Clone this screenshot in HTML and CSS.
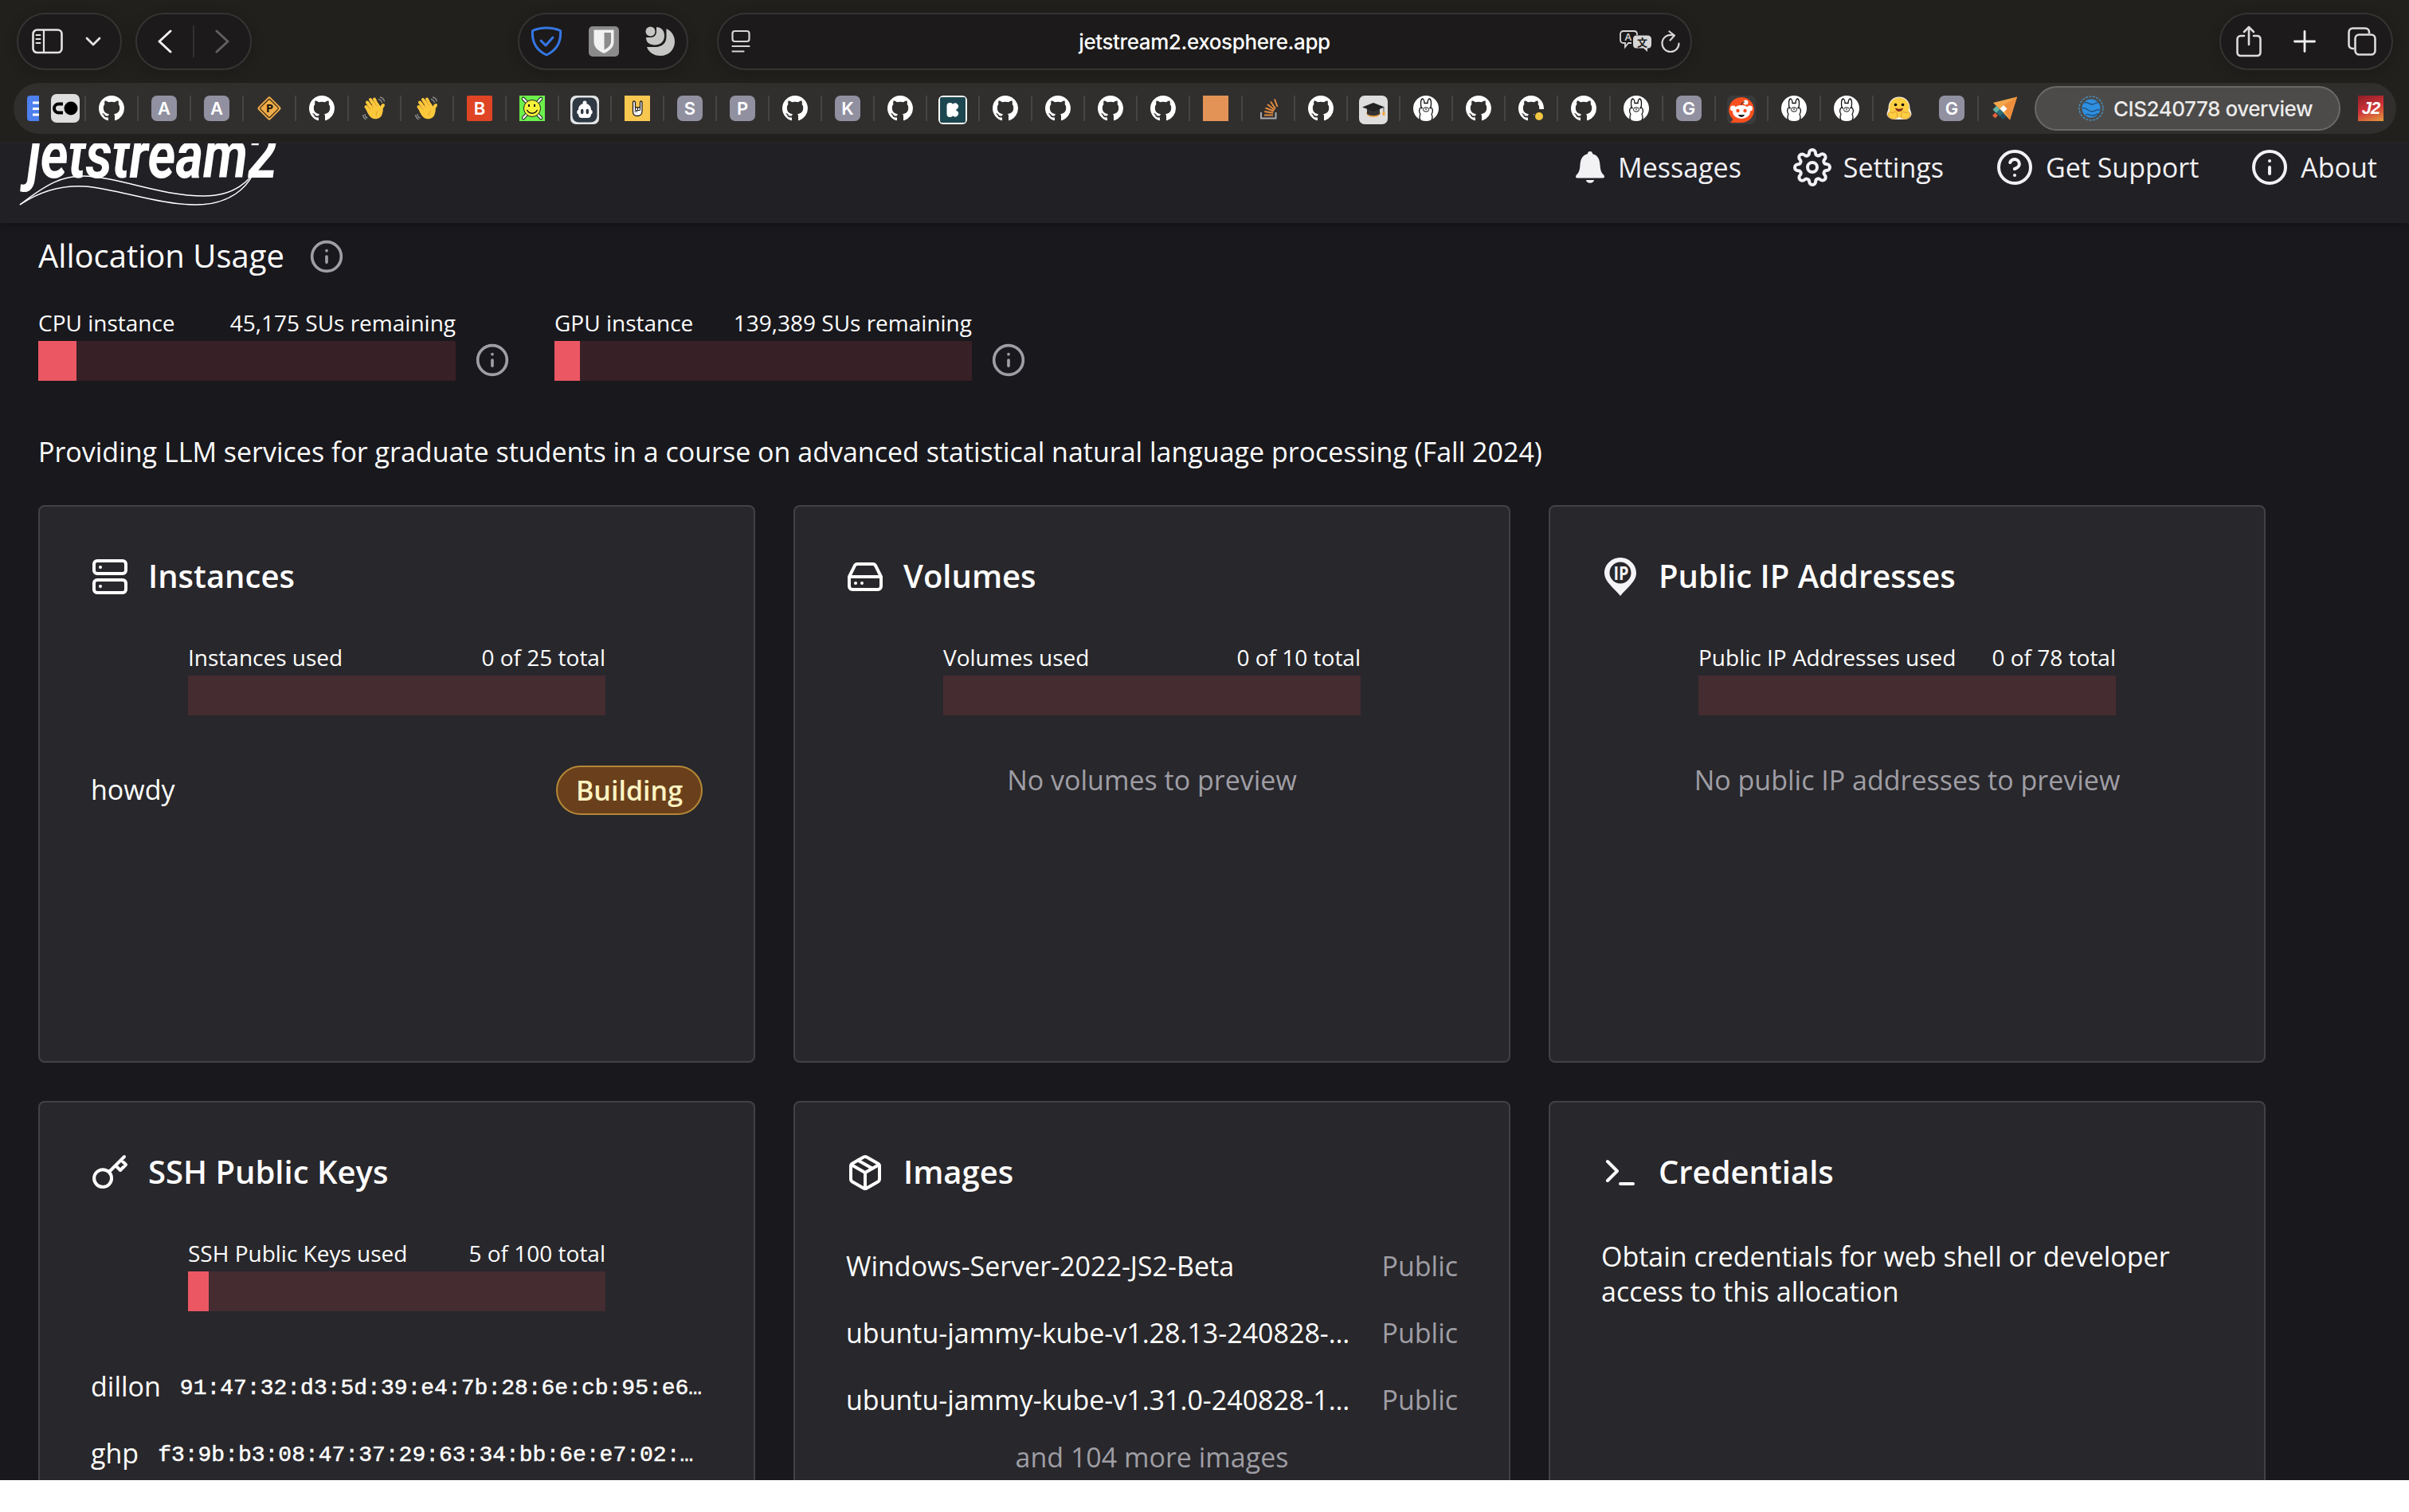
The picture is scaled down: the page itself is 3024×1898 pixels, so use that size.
FILE: index.html
```html
<html lang="en">

<head>
    <meta charset="UTF-8">
    <meta name="viewport" content="width=device-width, initial-scale=1.0">
    <title>CIS240778 overview</title>

    <link rel="stylesheet" href="styles.css">
</head>

<body>
    <!-- shared icons -->
    <svg width="0" height="0" class="defs">
        <symbol id="github" viewBox="0 0 16 16">
            <path fill="#fff" d="M8 0C3.58 0 0 3.58 0 8c0 3.54 2.29 6.53 5.47 7.59.4.07.55-.17.55-.38 0-.19-.01-.82-.01-1.49-2.01.37-2.53-.49-2.69-.94-.09-.23-.48-.94-.82-1.13-.28-.15-.68-.52-.01-.53.63-.01 1.08.58 1.23.82.72 1.21 1.87.87 2.33.66.07-.52.28-.87.51-1.07-1.78-.2-3.64-.89-3.64-3.95 0-.87.31-1.59.82-2.15-.08-.2-.36-1.02.08-2.12 0 0 .67-.21 2.2.82.64-.18 1.32-.27 2-.27s1.36.09 2 .27c1.53-1.04 2.2-.82 2.2-.82.44 1.1.16 1.92.08 2.12.51.56.82 1.27.82 2.15 0 3.07-1.87 3.75-3.65 3.95.29.25.54.73.54 1.48 0 1.07-.01 1.93-.01 2.2 0 .21.15.46.55.38A8.01 8.01 0 0 0 16 8c0-4.42-3.58-8-8-8z" />
        </symbol>
        <symbol id="wave" viewBox="0 0 32 32">
            <g stroke="#fbc83c" stroke-width="4" stroke-linecap="round" fill="none">
                <path d="M10 20L5.500 14M13 17L7 8.500M17 14L11 5M20 13L16 4.500" />
                <path d="M24.500 20c-.5-4 .5-6 2.500-8" />
            </g>
            <path fill="#fbc83c" d="M5.500 17l5-4 10-4 4 6c1.500 0 2 3 1.500 7-1 6-6 8-11 7-4-1-7-5-9.500-12z" />
            <path fill="none" stroke="#d9962a" stroke-width=".8" d="M7 12.500l4 5M9.500 8l5 7M14.500 6l4.500 7M21 19c-2 1-3 3-2.500 6" />
            <path fill="none" stroke="#8f8f8f" stroke-width="1.300" d="M21 4.500c2.500.5 4 2 4.500 4.500M23 2c3 .5 5 2.500 5.500 5.500M4 23c0 2.500 1.500 4.500 3.500 5M1.500 24c.5 3 2 5 4 6" />
        </symbol>
        <symbol id="llama" viewBox="0 0 32 32">
            <circle cx="16" cy="16" r="16" fill="#fff" />
            <g fill="none" stroke="#111" stroke-width="1.300">
                <path d="M9 31c-1.500-3-1.500-5 0-7.500-2-3-2-7 1-9-1-5-.5-10 1.500-10.500 1.500 0 2.500 3 2.500 5.500h4c0-2.500 1-5.500 2.500-5.500 2 .5 2.500 5.500 1.500 10.500 3 2 3 6 1 9 1.500 2.500 1.500 4.500 0 7.500" />
                <ellipse cx="16" cy="17.500" rx="3.600" ry="2.700" stroke-width="1" />
            </g>
            <path d="M15 16.500h2l-1 2z" />
            <circle cx="10.800" cy="15.500" r=".9" />
            <circle cx="21.200" cy="15.500" r=".9" />
        </symbol>
        <symbol id="info" viewBox="0 0 24 24">
            <g fill="none" stroke="currentColor" stroke-width="2" stroke-linecap="round">
                <circle cx="12" cy="12" r="10" />
                <path d="M12 16v-4M12 8h.01" />
            </g>
        </symbol>
    </svg>

    <div class="browser">
        <div class="toolbar">
            <div class="pill sidebar">
                <svg width="40" height="32" viewBox="0 0 40 32" fill="none" stroke="#e4e4e3" stroke-width="2.600">
                    <rect x="1.500" y="1.500" width="36" height="28.500" rx="5" />
                    <path d="M15 2v28" stroke-width="2.200" />
                    <path d="M5.500 8h5M5.500 13h5M5.500 18h5" stroke-width="2" stroke-linecap="round" />
                </svg>
                <svg width="20" height="12" viewBox="0 0 20 12" fill="none" stroke="#e4e4e3" stroke-width="2.800" stroke-linecap="round" stroke-linejoin="round">
                    <path d="M2 2l8 8 8-8" />
                </svg>
            </div>
            <div class="pill history">
                <svg width="18" height="30" viewBox="0 0 18 30" fill="none" stroke="#f0f0f0" stroke-width="3" stroke-linecap="round" stroke-linejoin="round">
                    <path d="M16 2L2 15l14 13" />
                </svg>
                <span class="divider"></span>
                <svg width="18" height="30" viewBox="0 0 18 30" fill="none" stroke="#62605f" stroke-width="3" stroke-linecap="round" stroke-linejoin="round">
                    <path d="M2 2l14 13L2 28" />
                </svg>
            </div>
            <div class="pill extensions">
                <svg width="40" height="38" viewBox="0 0 40 38" fill="none" stroke="#3577e5" stroke-width="3" stroke-linejoin="round" stroke-linecap="round">
                    <path d="M20 2c6 0 12 1 17.500 3.500C38.500 19 33 30 20 36 7 30 1.500 19 2.500 5.500 8 3 14 2 20 2z" />
                    <path d="M13 18l6 6 9-10" />
                </svg>
                <svg width="38" height="38" viewBox="0 0 38 38">
                    <rect width="38" height="38" rx="5" fill="#8b8b8b" />
                    <path fill="#f2f2f2" d="M6.500 4.500h25V19c0 8-6 12-12.500 15C12.500 31 6.500 27 6.500 19z" />
                    <path fill="#8b8b8b" d="M19.500 8H28v11c0 5-4 8-8.500 10.500z" />
                </svg>
                <svg width="38" height="38" viewBox="0 0 38 38" fill="#c6c6c5">
                    <circle cx="6.500" cy="6.500" r="6" />
                    <path d="M14 1c6 0 10 4 10 11s-5 11.500-12 11.500S1 20 1 14h6c4 0 7-3 7-7z" />
                    <path d="M26.500 3C33 6 37 12 37 19c0 10-7 18-18 18-9 0-15-5-17-11h11c8 0 13.500-5 13.500-13z" />
                </svg>
            </div>
            <div class="pill address">
                <svg width="24" height="30" viewBox="0 0 24 30" fill="none" stroke="#d6d6d6" stroke-width="2.200" stroke-linecap="round">
                    <rect x="1.500" y="2" width="21" height="13" rx="3" />
                    <path d="M1.500 21h21M1.500 27.500h14" />
                </svg>
                <span class="url">jetstream2.exosphere.app</span>
                <span class="address-actions">
                    <svg width="40" height="28" viewBox="0 0 40 28">
                        <path fill="none" stroke="#d6d6d6" stroke-width="1.800" d="M15 16h-4l-4 5v-5H5c-2.500 0-4-1.500-4-4V5c0-2.500 1.500-4 4-4h13c2.500 0 4 1.500 4 4v1" />
                        <path fill="#d6d6d6" d="M21 6.500h14c3 0 5 1.500 5 4.500v7c0 3-2 4.500-4 4.500h-1V27l-5-4.500h-9c-2.500 0-4-1.500-4-4.500v-7c0-3 1.500-4.500 4-4.500z" />
                        <text x="6.500" y="13" font-size="13" class="glyph" fill="#d6d6d6">A</text>
                        <text x="22" y="20" font-size="13" class="glyph cjk" fill="#1e1c1c">文</text>
                    </svg>
                    <svg width="24" height="29" viewBox="0 0 24 29" fill="none" stroke="#d6d6d6" stroke-width="2.200" stroke-linecap="round" stroke-linejoin="round">
                        <path d="M16 6.500C8 4 1.500 9.500 1.500 16.500a10.500 10.500 0 0 0 21 0M10.500 1.500l6.500 5-5.500 6" />
                    </svg>
                </span>
            </div>
            <div class="pill actions">
                <svg width="32" height="40" viewBox="0 0 32 40" fill="none" stroke="#dcdcdc" stroke-width="2.600" stroke-linecap="round" stroke-linejoin="round">
                    <path d="M10 13H6c-3 0-4.500 2-4.500 4.500v16C1.500 36.500 3 38 6 38h20c3 0 4.500-1.500 4.500-4.500v-16C30.500 15 29 13 26 13h-4M16 24V2.500M10 8l6-6 6 6" />
                </svg>
                <svg width="28" height="28" viewBox="0 0 28 28" stroke="#f0f0f0" stroke-width="2.800" stroke-linecap="round">
                    <path d="M14 1.500v25M1.500 14h25" />
                </svg>
                <svg width="36" height="36" viewBox="0 0 36 36" fill="none" stroke="#dcdcdc" stroke-width="2.600">
                    <rect x="9.500" y="9.500" width="25" height="25" rx="5" />
                    <path d="M8 27H6.500c-3 0-5-2-5-5V6.500c0-3 2-5 5-5H22c3 0 5 2 5 5V8" />
                </svg>
            </div>
        </div>

        <div class="tabs">
            <svg class="tab-doc" width="15" height="32" viewBox="0 0 15 32">
                <path fill="#4e80ee" d="M4 0h11v32H4c-2.500 0-4-1.500-4-4V4c0-2.500 1.500-4 4-4z" />
                <path stroke="#fff" stroke-width="3" d="M7 9h8M7 16.500h8M7 24h8" />
            </svg>
            <svg width="36" height="36" viewBox="0 0 36 36">
                <rect width="36" height="36" rx="7" fill="#dedede" />
                <circle cx="25" cy="18" r="8.500" />
                <path d="M15 12.500H9.500a5.500 5.500 0 0 0 0 11H15" fill="none" stroke="#000" stroke-width="4" />
            </svg>
            <div class="tab-list">
                <div class="tab"><svg class="fav"><use href="#github" /></svg></div>
                <div class="tab"><span class="fav letter">A</span></div>
                <div class="tab"><span class="fav letter">A</span></div>
                <div class="tab">
                    <svg class="fav" viewBox="0 0 32 32">
                        <rect x="5" y="5" width="22" height="22" rx="2.500" transform="rotate(45 16 16)" fill="#efac4c" />
                        <rect x="7.500" y="7.500" width="17" height="17" rx="1.500" transform="rotate(45 16 16)" fill="#f0ac49" stroke="#3b2a12" stroke-width="1.200" />
                        <text x="16.500" y="21" font-size="15" class="glyph bold" text-anchor="middle" fill="#20180c">P</text>
                    </svg>
                </div>
                <div class="tab"><svg class="fav"><use href="#github" /></svg></div>
                <div class="tab"><svg class="fav"><use href="#wave" /></svg></div>
                <div class="tab"><svg class="fav"><use href="#wave" /></svg></div>
                <div class="tab"><span class="fav letter red">B</span></div>
                <div class="tab">
                    <svg class="fav" viewBox="0 0 32 32">
                        <rect width="32" height="32" fill="#6cf04c" />
                        <path d="M5 4l22 24M27 4L5 28" stroke="#222" stroke-width="4.500" stroke-linecap="round" />
                        <path d="M5 4l22 24M27 4L5 28" stroke="#fff" stroke-width="2.500" stroke-linecap="round" />
                        <circle cx="16" cy="16" r="10.500" fill="#f5f03a" stroke="#222" />
                        <path d="M12 11v3M19 11v3" stroke="#111" stroke-width="2" />
                        <path d="M9.500 18c3 5.500 10 5.500 13 0" fill="none" stroke="#111" stroke-width="1.500" />
                    </svg>
                </div>
                <div class="tab">
                    <svg class="fav-l" viewBox="0 0 36 36">
                        <rect width="36" height="36" rx="7" fill="#e2e4e6" />
                        <rect x="2.500" y="2.500" width="31" height="31" rx="8" fill="#2e3944" />
                        <circle cx="18" cy="9" r="2.500" fill="#fff" />
                        <path d="M18 10c5 0 8 3 8 8 2 0 2.500 5 0 5.500 0 3-2 4.500-4 4.500h-8c-2 0-4-1.500-4-4.500-2.500-.5-2-5.500 0-5.500 0-5 3-8 8-8z" fill="#fff" />
                        <path d="M14.700 18.500v3M21.300 18.500v3" stroke="#2e3944" stroke-width="3.400" stroke-linecap="round" />
                    </svg>
                </div>
                <div class="tab">
                    <svg class="fav" viewBox="0 0 32 32">
                        <rect width="32" height="32" fill="#f7c750" />
                        <path d="M10.500 8.500V20c0 3.500 2 5.500 5.500 5.500s6-2 6-6v-11c0-2-2.500-2-2.500 0V15h-6V8.500c0-2-3-2-3 0z" fill="#fff" stroke="#222" stroke-width="1.300" />
                        <path d="M13.500 15v3.500h6V15M16.500 15v3.500M12.500 20h4" stroke="#222" fill="none" />
                    </svg>
                </div>
                <div class="tab"><span class="fav letter">S</span></div>
                <div class="tab"><span class="fav letter">P</span></div>
                <div class="tab"><svg class="fav"><use href="#github" /></svg></div>
                <div class="tab"><span class="fav letter">K</span></div>
                <div class="tab"><svg class="fav"><use href="#github" /></svg></div>
                <div class="tab">
                    <svg class="fav-l" viewBox="0 0 36 36">
                        <rect width="36" height="36" rx="6" fill="#fff" />
                        <rect x="2" y="2" width="32" height="32" rx="2" fill="#1d4750" />
                        <path d="M14.500 13v10M15 18l6-4.500M15 18l6 4.500" stroke="#fff" stroke-width="8" stroke-linecap="round" />
                    </svg>
                </div>
                <div class="tab"><svg class="fav"><use href="#github" /></svg></div>
                <div class="tab"><svg class="fav"><use href="#github" /></svg></div>
                <div class="tab"><svg class="fav"><use href="#github" /></svg></div>
                <div class="tab"><svg class="fav"><use href="#github" /></svg></div>
                <div class="tab"><span class="fav orange"></span></div>
                <div class="tab">
                    <svg class="fav" viewBox="0 0 32 32" fill="none">
                        <path d="M7 21v7.500h18.500V21" stroke="#a9abae" stroke-width="2" />
                        <path d="M11 24.500h11M11.200 20l11 1.800M12.500 15.500l10.500 4M15 11l9 7M19 7.500l6 9M24 4.500L27.500 14" stroke="#e08a3f" stroke-width="2" />
                    </svg>
                </div>
                <div class="tab"><svg class="fav"><use href="#github" /></svg></div>
                <div class="tab">
                    <svg class="fav-l" viewBox="0 0 36 36">
                        <rect width="36" height="36" rx="7" fill="#dedede" />
                        <path d="M9 21c5 3 13 3 18 0 0 8-18 8-18 0z" fill="#eda544" />
                        <path d="M10 16h16v7c-4 3-12 3-16 0z" fill="#333" />
                        <path d="M18 9l14 5.500L18 20 4 14.500z" fill="#222" />
                        <path d="M31 15v7" stroke="#555" />
                        <path d="M31 20v5" stroke="#eda544" stroke-width="3" />
                    </svg>
                </div>
                <div class="tab"><svg class="fav"><use href="#llama" /></svg></div>
                <div class="tab"><svg class="fav"><use href="#github" /></svg></div>
                <div class="tab">
                    <svg class="fav" viewBox="0 0 32 32">
                        <use href="#github" width="32" height="32" />
                        <path fill="#312f2e" d="M20 17h12v15H20z" />
                        <circle cx="26" cy="26" r="5" fill="#f2c744" />
                    </svg>
                </div>
                <div class="tab"><svg class="fav"><use href="#github" /></svg></div>
                <div class="tab"><svg class="fav"><use href="#llama" /></svg></div>
                <div class="tab"><span class="fav letter">G</span></div>
                <div class="tab">
                    <svg class="fav-l" viewBox="0 0 36 36">
                        <rect width="36" height="36" rx="7" fill="#3a3b3c" />
                        <path d="M18 2a16 16 0 1 1 0 32H4l3.500-4A16 16 0 0 1 18 2z" fill="#fa4f1e" />
                        <circle cx="7.500" cy="16" r="3.500" fill="#fff" />
                        <circle cx="28.500" cy="16" r="3.500" fill="#fff" />
                        <ellipse cx="18" cy="20.500" rx="11" ry="8.500" fill="#fff" />
                        <circle cx="23.500" cy="8.500" r="3" fill="#fff" />
                        <path d="M18 12c0-3 2-4 4-4" stroke="#222" fill="none" />
                        <circle cx="13.500" cy="19" r="2.200" fill="#fa4f1e" />
                        <circle cx="22.500" cy="19" r="2.200" fill="#fa4f1e" />
                        <path d="M14 24h8c-1 4-7 4-8 0z" fill="#222" />
                    </svg>
                </div>
                <div class="tab"><svg class="fav"><use href="#llama" /></svg></div>
                <div class="tab"><svg class="fav"><use href="#llama" /></svg></div>
                <div class="tab">
                    <svg class="fav" viewBox="0 0 32 32">
                        <path d="M16 1.500c8 0 13.500 6 13.500 14 0 3 2 5 2 8-1 5-6 7-11 6.500h-9C6 30 1.500 28 .5 23.500c0-3 2-5 2-8 0-8 5.500-14 13.500-14z" fill="#f6f1e4" />
                        <circle cx="16" cy="15" r="12.500" fill="#fbcf41" />
                        <path d="M2 24c0-3 3-5 5-2l4-2c3 1 3 6 2 8-3 2-10 2-11-4zM30 24c0-3-3-5-5-2l-4-2c-3 1-3 6-2 8 3 2 10 2 11-4z" fill="#fbcf41" stroke="#e59a35" />
                        <circle cx="11.500" cy="11.500" r="1.800" />
                        <circle cx="20.500" cy="11.500" r="1.800" />
                        <path d="M11 15.500c3 1.500 7 1.500 10 0-1 6-9 6-10 0z" fill="#8a2d20" />
                    </svg>
                </div>
                <div class="tab no-line"><span class="fav letter">G</span></div>
                <div class="tab">
                    <svg class="fav" viewBox="0 0 32 32">
                        <path d="M32 1.500L2 9l21 21.500z" fill="#f3a74c" />
                        <path d="M32 1.500L13 13l10 17.500z" fill="#ef8f3d" />
                        <path d="M6 13l4.500 4.500L6 22l-4.500-4.500z" fill="#63b5a4" />
                        <path d="M15 12l4.500 4.500L15 21l-4.500-4.500z" fill="#fff" />
                        <path d="M10.500 17l4.500 4.500-4.500 4.500L6 21.500z" fill="#2b6f7d" />
                        <path d="M4.500 21.500L8 25l-3.500 3.500L1 25z" fill="#e0623b" />
                        <path d="M14.500 22l4 4-4 4-4-4z" fill="#1d4d63" />
                    </svg>
                </div>
            </div>
            <div class="tab-active">
                <svg class="fav" viewBox="0 0 32 32">
                    <circle cx="16" cy="16" r="15" fill="none" stroke="#4a9fd0" stroke-width="1.200" stroke-dasharray="3 1.500" />
                    <circle cx="16" cy="16" r="11.500" fill="#2f8fe0" />
                    <path d="M7 9c4-2 6 2 10 2s5-3 8-2M5 16c5-2 7 4 12 4s6-4 10-2M9 24c4-2 5 1 9 1s4-2 7-2" fill="none" stroke="#1f4d78" stroke-width="1.300" />
                </svg>
                <span>CIS240778 overview</span>
            </div>
            <span class="fav j2">J2</span>
        </div>
    </div>

    <div class="app">
        <header>
            <svg class="logo" width="360" height="100" viewBox="0 0 360 100" fill="none" stroke="#fff">
                <text x="34" y="43" font-size="84" textLength="314" lengthAdjust="spacingAndGlyphs" fill="#fff" stroke="none">jetstream2</text>
                <path stroke-width="1.500" d="M25 77C60 50 78 41 104 41C150 42 200 66 256 66C295 66 315 46 323 29" />
                <path stroke-width="1.500" d="M25 77C50 60 78 52 108 54C150 58 200 77 246 77C290 77 310 54 318 38" />
            </svg>
            <nav>
                <a>
                    <svg class="bell" width="44" height="44" viewBox="0 0 44 44" fill="#f2f2f5">
                        <path d="M22 2c2 0 3 1 3 3 7 2 9 7 9.500 14 .5 8 2 10 5 13 1 2 .5 3.500-1.500 3.500H6c-2 0-2.500-1.500-1.500-3.500 3-3 4.500-5 5-13C10 12 12 7 19 5c0-2 1-3 3-3z" />
                        <path d="M17 38h10c-.5 5-9.500 5-10 0z" />
                    </svg>
                    Messages
                </a>
                <a>
                    <svg width="48" height="48" viewBox="0 0 24 24" fill="none" stroke="currentColor" stroke-width="2" stroke-linecap="round" stroke-linejoin="round">
                        <circle cx="12" cy="12" r="3" />
                        <path d="M19.400 15a1.650 1.650 0 0 0 .33 1.820l.06.06a2 2 0 0 1 0 2.830 2 2 0 0 1-2.830 0l-.06-.06a1.650 1.650 0 0 0-1.820-.33 1.650 1.650 0 0 0-1 1.510V21a2 2 0 0 1-2 2 2 2 0 0 1-2-2v-.09A1.650 1.650 0 0 0 9 19.400a1.650 1.650 0 0 0-1.820.33l-.06.06a2 2 0 0 1-2.830 0 2 2 0 0 1 0-2.830l.06-.06a1.650 1.650 0 0 0 .33-1.820 1.650 1.650 0 0 0-1.510-1H3a2 2 0 0 1-2-2 2 2 0 0 1 2-2h.09A1.650 1.650 0 0 0 4.600 9a1.650 1.650 0 0 0-.33-1.820l-.06-.06a2 2 0 0 1 0-2.830 2 2 0 0 1 2.830 0l.06.06a1.650 1.650 0 0 0 1.820.33H9a1.650 1.650 0 0 0 1-1.510V3a2 2 0 0 1 2-2 2 2 0 0 1 2 2v.09a1.650 1.650 0 0 0 1 1.510 1.650 1.650 0 0 0 1.820-.33l.06-.06a2 2 0 0 1 2.830 0 2 2 0 0 1 0 2.830l-.06.06a1.650 1.650 0 0 0-.33 1.820V9a1.650 1.650 0 0 0 1.510 1H21a2 2 0 0 1 2 2 2 2 0 0 1-2 2h-.09a1.650 1.650 0 0 0-1.510 1z" />
                    </svg>
                    Settings
                </a>
                <a>
                    <svg width="48" height="48" viewBox="0 0 24 24" fill="none" stroke="currentColor" stroke-width="2" stroke-linecap="round" stroke-linejoin="round">
                        <circle cx="12" cy="12" r="10" />
                        <path d="M9.090 9a3 3 0 0 1 5.830 1c0 2-3 3-3 3M12 17h.01" />
                    </svg>
                    Get Support
                </a>
                <a><svg width="48" height="48"><use href="#info" /></svg>About</a>
            </nav>
        </header>

        <main>
            <div class="heading">
                <h2>Allocation Usage</h2>
                <svg class="muted" width="44" height="44"><use href="#info" /></svg>
            </div>

            <div class="usage">
                <div class="meter">
                    <div class="meter-label"><span>CPU instance</span><span>45,175 SUs remaining</span></div>
                    <div class="bar"><div class="fill" style="width: 9.2%"></div></div>
                </div>
                <svg class="muted" width="44" height="44"><use href="#info" /></svg>
                <div class="meter">
                    <div class="meter-label"><span>GPU instance</span><span>139,389 SUs remaining</span></div>
                    <div class="bar"><div class="fill" style="width: 6.2%"></div></div>
                </div>
                <svg class="muted" width="44" height="44"><use href="#info" /></svg>
            </div>

            <p class="description">Providing LLM services for graduate students in a course on advanced statistical natural language processing (Fall 2024)</p>

            <div class="cards">
                <section class="card">
                    <div class="card-title">
                        <svg class="icon" viewBox="0 0 24 24">
                            <rect x="2" y="2" width="20" height="8" rx="2" />
                            <rect x="2" y="14" width="20" height="8" rx="2" />
                            <path d="M6 6h.01M6 18h.01" />
                        </svg>
                        <h3>Instances</h3>
                    </div>
                    <div class="meter">
                        <div class="meter-label"><span>Instances used</span><span>0 of 25 total</span></div>
                        <div class="bar"></div>
                    </div>
                    <div class="list">
                        <div class="item spread"><span class="name">howdy</span><span class="badge">Building</span></div>
                    </div>
                </section>

                <section class="card">
                    <div class="card-title">
                        <svg class="icon" viewBox="0 0 24 24">
                            <path d="M22 12H2M5.450 5.110L2 12v6a2 2 0 0 0 2 2h16a2 2 0 0 0 2-2v-6l-3.450-6.890A2 2 0 0 0 16.760 4H7.240a2 2 0 0 0-1.790 1.110zM6 16h.01M10 16h.01" />
                        </svg>
                        <h3>Volumes</h3>
                    </div>
                    <div class="meter">
                        <div class="meter-label"><span>Volumes used</span><span>0 of 10 total</span></div>
                        <div class="bar"></div>
                    </div>
                    <p class="empty">No volumes to preview</p>
                </section>

                <section class="card">
                    <div class="card-title">
                        <svg width="48" height="48" viewBox="0 0 48 48">
                            <path fill="#f4f4f6" fill-rule="evenodd" d="M24 0c11 0 20 8.500 20 19.500C44 30 33 37 24 48 15 37 4 30 4 19.500 4 8.500 13 0 24 0zm0 5.500a13.500 13.500 0 1 0 0 27 13.500 13.500 0 0 0 0-27z" />
                            <text x="25" y="27.500" font-size="23" class="glyph bold" text-anchor="middle" textLength="19" lengthAdjust="spacingAndGlyphs" fill="#f4f4f6">IP</text>
                        </svg>
                        <h3>Public IP Addresses</h3>
                    </div>
                    <div class="meter">
                        <div class="meter-label"><span>Public IP Addresses used</span><span>0 of 78 total</span></div>
                        <div class="bar"></div>
                    </div>
                    <p class="empty">No public IP addresses to preview</p>
                </section>

                <section class="card">
                    <div class="card-title">
                        <svg class="icon" viewBox="0 0 24 24">
                            <path d="M21 2l-2 2m-7.610 7.610a5.500 5.500 0 1 1-7.778 7.778 5.500 5.500 0 0 1 7.777-7.777zm0 0L15.500 7.500m0 0l3 3L22 7l-3-3m-3.500 3.500L19 4" />
                        </svg>
                        <h3>SSH Public Keys</h3>
                    </div>
                    <div class="meter">
                        <div class="meter-label"><span>SSH Public Keys used</span><span>5 of 100 total</span></div>
                        <div class="bar"><div class="fill" style="width: 5%"></div></div>
                    </div>
                    <div class="list">
                        <div class="item"><span>dillon</span><code>91:47:32:d3:5d:39:e4:7b:28:6e:cb:95:e6…</code></div>
                        <div class="item"><span>ghp</span><code>f3:9b:b3:08:47:37:29:63:34:bb:6e:e7:02:…</code></div>
                    </div>
                </section>

                <section class="card">
                    <div class="card-title">
                        <svg class="icon" viewBox="0 0 24 24">
                            <path d="M16.500 9.400l-9-5.190M21 16V8a2 2 0 0 0-1-1.730l-7-4a2 2 0 0 0-2 0l-7 4A2 2 0 0 0 3 8v8a2 2 0 0 0 1 1.730l7 4a2 2 0 0 0 2 0l7-4A2 2 0 0 0 21 16z" />
                            <path d="M3.270 6.960L12 12.010l8.730-5.050M12 22.080V12" />
                        </svg>
                        <h3>Images</h3>
                    </div>
                    <div class="list images">
                        <div class="item spread"><span>Windows-Server-2022-JS2-Beta</span><span class="muted">Public</span></div>
                        <div class="item spread"><span>ubuntu-jammy-kube-v1.28.13-240828-…</span><span class="muted">Public</span></div>
                        <div class="item spread"><span>ubuntu-jammy-kube-v1.31.0-240828-1…</span><span class="muted">Public</span></div>
                        <p class="more">and 104 more images</p>
                    </div>
                </section>

                <section class="card">
                    <div class="card-title">
                        <svg class="icon" viewBox="0 0 24 24">
                            <path d="M4 17l6-6-6-6M12 19h8" />
                        </svg>
                        <h3>Credentials</h3>
                    </div>
                    <p class="text">Obtain credentials for web shell or developer access to this allocation</p>
                </section>
            </div>
        </main>
    </div>
</body>

</html>
```
FILE: styles.css
```css
* {
    box-sizing: border-box;
    margin: 0;
    padding: 0;
}

body {
    display: flex;
    flex-direction: column;
    height: 1898px;
    overflow: hidden;
    background: white;
    color: white;
    font-family: 'Open Sans', sans-serif;
    font-size: 34px;
}

svg {
    display: block;
    flex-shrink: 0;
}

.defs {
    position: absolute;
}

/* browser */

.browser {
    height: 180px;
    flex-shrink: 0;
    padding-top: 16px;
    background: #21201d;
    border-bottom: 2px solid #252327;
    font-family: Inter, sans-serif;
}

.toolbar {
    display: flex;
    padding: 0 20px 0 21px;
}

.pill {
    display: flex;
    align-items: center;
    height: 72px;
    border: 2px solid #363433;
    border-radius: 36px;
    background: #1c1a1a;
    box-shadow: 0 4px 16px rgba(20, 18, 18, 0.3);
}

.sidebar {
    width: 132px;
    padding-left: 17px;
    gap: 27px;
}

.history {
    width: 146px;
    margin-left: 17px;
    justify-content: center;
    gap: 26px;
}

.divider {
    width: 2px;
    height: 40px;
    background: #333131;
}

.extensions {
    width: 214px;
    margin-left: 334px;
    padding-left: 14px;
    gap: 33px;
}

.address {
    width: 1224px;
    margin-left: 36px;
    padding: 0 13px 0 16px;
    justify-content: space-between;
}

.url {
    font-size: 26px;
    font-weight: 500;
    letter-spacing: -0.4px;
    padding-left: 49px;
}

.address-actions {
    display: flex;
    align-items: center;
    gap: 12px;
}

.actions {
    width: 218px;
    margin-left: auto;
    padding: 0 19px;
    justify-content: space-between;
}

.glyph {
    font-family: 'Open Sans', sans-serif;
    font-weight: 600;
}

.bold {
    font-weight: 700;
}

.cjk {
    font-family: 'Noto Sans CJK SC', sans-serif;
    font-weight: 700;
}

.tabs {
    display: flex;
    align-items: center;
    height: 64px;
    margin: 16px 16px 0 17px;
    padding-left: 17px;
    border-radius: 32px;
    background: #312f2e;
}

.tab-doc {
    margin-right: 15px;
}

.tab-list {
    display: flex;
    margin-left: 6px;
}

.tab {
    width: 66px;
    height: 32px;
    display: grid;
    place-items: center;
    border-left: 2px solid #474544;
}

.no-line {
    border-color: transparent;
}

.fav {
    width: 32px;
    height: 32px;
}

.fav-l {
    width: 36px;
    height: 36px;
}

.letter {
    display: grid;
    place-items: center;
    border-radius: 7px;
    background: #9190a0;
    color: white;
    font-size: 22px;
    font-weight: 600;
}

.red {
    border-radius: 2px;
    background: #df4524;
}

.orange {
    background: #e39356;
}

.tab-active {
    display: flex;
    align-items: center;
    justify-content: center;
    gap: 12px;
    width: 384px;
    height: 56px;
    margin-left: 6px;
    padding-left: 26px;
    padding-right: 6px;
    border: 2px solid #6b6967;
    border-radius: 28px;
    background: #4d4b49;
    color: #ececec;
    font-size: 26px;
    font-weight: 500;
    letter-spacing: -0.45px;
    white-space: nowrap;
}

.j2 {
    display: grid;
    place-items: center;
    margin-left: 22px;
    background: linear-gradient(160deg, #8f1d26, #cf3338 50%, #e39a3a);
    font: italic 700 22px 'Liberation Sans', sans-serif;
    letter-spacing: -1px;
}

/* app */

.app {
    height: 1678px;
    flex-shrink: 0;
    overflow: hidden;
    background: #19181d;
}

header {
    display: flex;
    justify-content: space-between;
    height: 100px;
    padding-right: 40px;
    background: #212025;
    color: #f2f2f5;
    box-shadow: 0 2px 8px rgba(0, 0, 0, 0.25);
}

.logo {
    overflow: hidden;
    font-family: 'Roboto', sans-serif;
    font-weight: 700;
    font-style: italic;
}

nav {
    display: flex;
    gap: 65px;
    height: 60px;
}

nav a {
    display: flex;
    align-items: center;
    gap: 15px;
}

.bell {
    margin-right: -2px;
}

.muted {
    color: #9f9ea5;
}

main {
    padding: 20px 48px 0;
}

.heading {
    display: flex;
    align-items: center;
    gap: 31px;
}

h2 {
    font-size: 40px;
    font-weight: 400;
    line-height: 40px;
    margin-top: -3px;
}

.usage {
    display: flex;
    align-items: flex-end;
    margin-top: 47px;
}

.usage>svg {
    margin: 0 56px 4px 24px;
}

.meter {
    width: 524px;
}

.meter-label {
    display: flex;
    justify-content: space-between;
    margin-bottom: 9px;
    font-size: 28px;
    line-height: 28px;
}

.bar {
    height: 50px;
    background: #372026;
}

.fill {
    height: 100%;
    background: #eb5763;
}

.description {
    margin-top: 67px;
    line-height: 44px;
}

.cards {
    display: grid;
    grid-template-columns: repeat(3, 900px);
    grid-auto-rows: 700px;
    gap: 48px;
    margin-top: 45px;
}

.card {
    padding: 64px;
    border: 2px solid #424146;
    border-radius: 8px;
    background: #28272b;
}

.card-title {
    display: flex;
    align-items: center;
    gap: 24px;
    height: 48px;
}

h3 {
    font-size: 40px;
    font-weight: 600;
    line-height: 40px;
    margin-top: -3px;
}

.icon {
    width: 48px;
    height: 48px;
    fill: none;
    stroke: white;
    stroke-width: 2;
    stroke-linecap: round;
    stroke-linejoin: round;
}

.card .meter {
    margin: 63px auto 0;
}

.card .bar {
    background: #442c31;
}

.list {
    display: flex;
    flex-direction: column;
    gap: 22px;
    margin-top: 63px;
}

.images {
    margin-top: 62px;
}

.item {
    display: flex;
    align-items: center;
    gap: 24px;
    height: 62px;
    white-space: nowrap;
}

.spread {
    justify-content: space-between;
}

.name {
    margin-top: -2px;
}

.badge {
    height: 62px;
    padding: 0 23px;
    border: 2px solid #b58837;
    border-radius: 31px;
    background: #6a401c;
    color: #fdf3c2;
    font-weight: 600;
    line-height: 59px;
}

.empty {
    margin-top: 64px;
    color: #9f9ea5;
    line-height: 34px;
    text-align: center;
}

code {
    margin-top: 4px;
    font-family: 'Liberation Mono', monospace;
    font-size: 28px;
    -webkit-text-stroke: 0.5px;
}

.more {
    margin-top: 2px;
    color: #9f9ea5;
    line-height: 34px;
    text-align: center;
}

.text {
    margin-top: 59px;
    line-height: 44px;
}
```
